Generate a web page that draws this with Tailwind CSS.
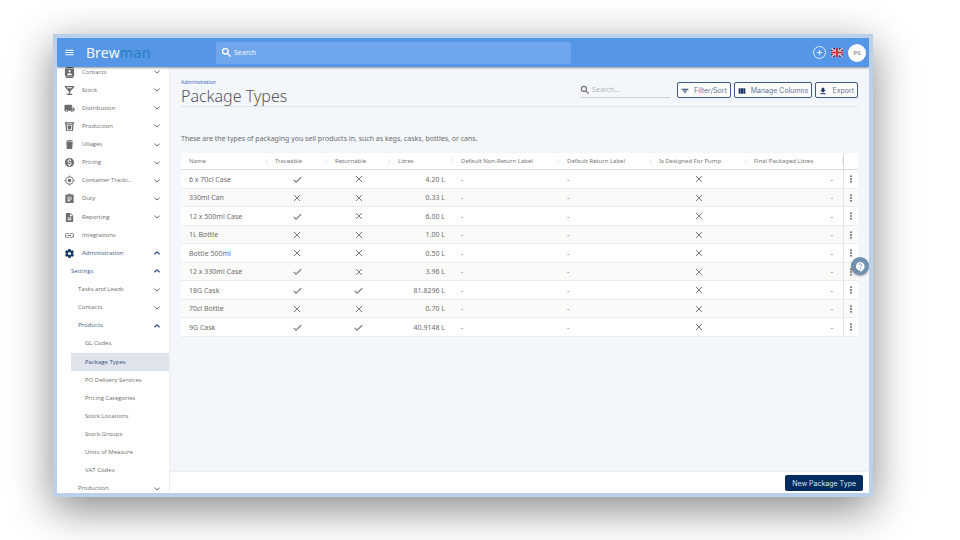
<!DOCTYPE html>
<html lang="en">
<head>
    <meta charset="UTF-8">
    <meta name="viewport" content="width=device-width, initial-scale=1.0">
    <title>Package Types - Brewman</title>
    <script src="https://cdn.jsdelivr.net/npm/@tailwindcss/browser@4"></script>
</head>
<body class="bg-white font-['Noto_Sans','Open_Sans',sans-serif] text-[#6c6c6c]">

    <!-- Icon sprite -->
    <svg class="hidden" xmlns="http://www.w3.org/2000/svg">
        <symbol id="menu" viewBox="0 0 24 24"><path d="M3 18h18v-2H3v2zm0-5h18v-2H3v2zm0-7v2h18V6H3z"/></symbol>
        <symbol id="search" viewBox="0 0 24 24"><g fill="none" stroke="currentColor" stroke-width="3"><circle cx="9.500" cy="9.500" r="6"/><path d="m14 14 7 7"/></g></symbol>
        <symbol id="contacts" viewBox="0 0 24 24"><path d="M4 0h16v2H4zM4 22h16v2H4zM20 3H4a2 2 0 0 0-2 2v14c0 1.100.9 2 2 2h16a2 2 0 0 0 2-2V5a2 2 0 0 0-2-2zm-8 3.500a2.500 2.500 0 1 1 0 5 2.500 2.500 0 0 1 0-5zM17 18H7v-1.500c0-2 3.300-3 5-3s5 1 5 3V18z"/></symbol>
        <symbol id="stock" viewBox="0 0 24 24"><path d="M22 5V2H2v3l8.500 9v5H6v3h12v-3h-4.500v-5L22 5zM7.400 7 5.700 5h12.700l-1.800 2H7.400z"/></symbol>
        <symbol id="truck" viewBox="0 0 24 24"><path d="M20 8h-3V4H3a2 2 0 0 0-2 2v11h2a3 3 0 0 0 6 0h6a3 3 0 0 0 6 0h2v-5l-3-4zM6 18.500a1.500 1.500 0 1 1 0-3 1.500 1.500 0 0 1 0 3zm13.500-9 2 2.500H17V9.500h2.500zM18 18.500a1.500 1.500 0 1 1 0-3 1.500 1.500 0 0 1 0 3z"/></symbol>
        <symbol id="production" viewBox="0 0 24 24"><path fill-rule="evenodd" d="M2 2h20v4h-1l-1.500 16h-15L3 6H2V2zm3 2v1.500h14V4H5zm1 4 .8 12h10.400L18 8H6z"/><path d="M8 10h8v5a4 4 0 0 1-8 0z"/></symbol>
        <symbol id="bin" viewBox="0 0 24 24"><path d="M6 21c0 .6.900 1 2 1h8c1.100 0 2-.4 2-1l1-15H5l1 15zM19 3h-3.500l-1-1h-5l-1 1H5v2h14V3z"/></symbol>
        <symbol id="pricing" viewBox="0 0 24 24"><path d="M12 2a10 10 0 1 0 0 20 10 10 0 0 0 0-20zm1.400 16.100V20h-2.700v-1.900c-1.700-.4-3.200-1.500-3.300-3.500h2c.1 1.100.8 1.900 2.600 1.900 2 0 2.400-1 2.400-1.600 0-.8-.4-1.600-2.700-2.100-2.500-.6-4.200-1.600-4.200-3.700 0-1.700 1.400-2.800 3.100-3.200V4h2.700v2c1.900.4 2.800 1.800 2.900 3.400h-2c0-1.100-.6-1.900-2.200-1.900-1.500 0-2.400.7-2.400 1.600 0 .8.700 1.400 2.700 1.900s4.200 1.400 4.200 3.900c0 1.800-1.400 2.800-3.100 3.200z"/></symbol>
        <symbol id="target" viewBox="0 0 24 24"><path d="M12 8a4 4 0 1 0 0 8 4 4 0 0 0 0-8zm8.900 3A9 9 0 0 0 13 3.100V1h-2v2.100A9 9 0 0 0 3.100 11H1v2h2.100a9 9 0 0 0 7.900 7.900V23h2v-2.100a9 9 0 0 0 7.900-7.900H23v-2h-2.100zM12 19a7 7 0 1 1 0-14 7 7 0 0 1 0 14z"/></symbol>
        <symbol id="duty" viewBox="0 0 24 24"><path d="M19 3h-4.200a3 3 0 0 0-5.600 0H5a2 2 0 0 0-2 2v15c0 1.100.9 2 2 2h14a2 2 0 0 0 2-2V5a2 2 0 0 0-2-2zm-7 0a1 1 0 1 1 0 2 1 1 0 0 1 0-2zm2 15H7v-2h7v2zm3-4H7v-2h10v2zm0-4H7V8h10v2z"/></symbol>
        <symbol id="report" viewBox="0 0 24 24"><path d="M14 2H6a2 2 0 0 0-2 2v16c0 1.100.9 2 2 2h12a2 2 0 0 0 2-2V8l-6-6zm2 16H8v-2h8v2zm0-4H8v-2h8v2zm-3-5V3.500L18.500 9H13z"/></symbol>
        <symbol id="link" viewBox="0 0 24 24"><path d="M3.900 12A3.100 3.100 0 0 1 7 8.900h4V7H7a5 5 0 0 0 0 10h4v-1.900H7A3.100 3.100 0 0 1 3.900 12zM8 13h8v-2H8v2zm9-6h-4v1.900h4a3.100 3.100 0 0 1 0 6.200h-4V17h4a5 5 0 0 0 0-10z"/></symbol>
        <symbol id="cog" viewBox="0 0 24 24"><path d="M19.400 13c.1-.3.100-.7.100-1s0-.7-.1-1l2.100-1.600c.2-.2.300-.4.100-.7l-2-3.400c-.1-.2-.4-.3-.6-.2l-2.500 1c-.5-.4-1.100-.7-1.700-1l-.4-2.600c0-.3-.2-.5-.5-.5h-4c-.2 0-.4.2-.5.400L9 5.100c-.6.300-1.100.6-1.700 1l-2.500-1c-.2-.1-.5 0-.6.2l-2 3.400c-.1.300 0 .5.100.7L4.500 11c0 .3-.1.700-.1 1s0 .7.100 1l-2.100 1.600c-.2.2-.3.400-.1.700l2 3.400c.1.200.4.300.6.200l2.500-1c.5.400 1.100.7 1.700 1l.4 2.600c0 .3.200.5.500.5h4c.3 0 .5-.2.500-.4l.4-2.700c.6-.3 1.200-.6 1.700-1l2.500 1c.2.100.5 0 .6-.2l2-3.400c.1-.2.100-.5-.1-.7L19.400 13zM12 15.500a3.500 3.500 0 1 1 0-7 3.500 3.500 0 0 1 0 7z"/></symbol>
        <symbol id="down" viewBox="0 0 24 24"><path fill="none" stroke="currentColor" stroke-width="3" d="m4 8 8 7 8-7"/></symbol>
        <symbol id="up" viewBox="0 0 24 24"><path fill="none" stroke="currentColor" stroke-width="4" d="m4 16 8-7 8 7"/></symbol>
        <symbol id="tick" viewBox="0 0 24 24"><path fill="none" stroke="currentColor" stroke-width="3" d="m2 13 6 6L22 6"/></symbol>
        <symbol id="cross" viewBox="0 0 24 24"><path fill="none" stroke="currentColor" stroke-width="3" d="m3 3 18 18M21 3 3 21"/></symbol>
        <symbol id="dots" viewBox="0 0 24 24"><circle cx="12" cy="4" r="3"/><circle cx="12" cy="12" r="3"/><circle cx="12" cy="20" r="3"/></symbol>
        <symbol id="filter" viewBox="0 0 24 24"><path d="M10 19h4v-3h-4v3zM2 5v3h20V5H2zm4 8.500h12v-3H6v3z"/></symbol>
        <symbol id="columns" viewBox="0 0 24 24"><path d="M2 4h6v16H2zM9 4h6v16H9zM16 4h6v16h-6z"/></symbol>
        <symbol id="download" viewBox="0 0 24 24"><path d="M20 9h-4V2H8v7H4l8 8 8-8zM4 19v3h16v-3H4z"/></symbol>
    </svg>

    <div class="h-screen pt-[34px] pr-[87px] pb-[43px] pl-[53px]">
        <div class="relative flex h-full flex-col overflow-hidden border-4 border-[#bbd0ea] shadow-[0_12px_40px_rgba(0,0,0,0.48)]">

            <!-- Top bar -->
            <header class="z-10 flex h-[29px] shrink-0 items-center bg-[#5596e6] pr-[3px] pl-[7px] text-white shadow-[0_1px_2px_rgba(0,0,0,0.4)]">
                <button type="button" aria-label="Menu"><svg class="size-[11px] fill-current"><use href="#menu"/></svg></button>
                <a href="#" class="ml-[11px] flex w-[130px] items-baseline font-['Open_Sans',sans-serif] text-[14px] leading-5">Brew<span class="font-['DejaVu_Sans',sans-serif] text-[14px] text-[#2482bd]">man</span></a>
                <label class="flex h-[22px] w-[355px] items-center gap-[2px] rounded-[2px] bg-[#70a7ec] pl-[5px]">
                    <svg class="size-[11px] shrink-0"><use href="#search"/></svg>
                    <input type="search" aria-label="Search everything" placeholder="Search" class="w-full bg-transparent pt-px text-[7px] outline-none placeholder:text-white/90">
                </label>
                <div class="ml-auto flex items-center gap-[5px]">
                    <button type="button" aria-label="Add" class="flex size-[13px] items-center justify-center rounded-full border border-white/80">
                        <svg class="size-[7px]" viewBox="0 0 8 8" stroke="currentColor"><path d="M4 1v6M1 4h6"/></svg>
                    </button>
                    <button type="button" aria-label="Language">
                        <svg class="h-[9px] w-3" viewBox="0 0 24 18">
                            <path fill="#223a80" d="M0 0h24v18H0z"/>
                            <path stroke="#fff" stroke-width="3" d="m0 0 24 18M24 0 0 18"/>
                            <path stroke="#d3283d" stroke-width="1" d="m0 0 24 18M24 0 0 18"/>
                            <path stroke="#fff" stroke-width="6" d="M12 0v18M0 9h24"/>
                            <path stroke="#d3283d" stroke-width="4" d="M12 0v18M0 9h24"/>
                        </svg>
                    </button>
                    <button type="button" class="size-[18px] rounded-full bg-white pt-px text-[6px] font-semibold text-[#888]">PS</button>
                </div>
            </header>

            <div class="flex min-h-0 flex-1">
                <!-- Sidebar, scrolled a little way down -->
                <aside class="w-[113px] shrink-0 overflow-hidden border-r border-[#edf0f4] bg-white font-['Open_Sans',sans-serif]">
                    <nav id="nav" class="-mt-1 grid h-[calc(100%+9px)] auto-rows-fr"></nav>
                </aside>

                <div class="flex min-w-0 flex-1 flex-col bg-[#f3f6fb]">
                    <main class="flex-1 px-[11px] pt-3">
                        <div class="flex h-7 items-start justify-between border-b border-[#dfe3e8]">
                            <div>
                                <a href="#" class="block text-[5px] leading-[6px] text-[#3f6fb5]">Administration</a>
                                <h1 class="text-[16px] leading-[22px] font-light text-[#555]">Package Types</h1>
                            </div>
                            <div class="mt-[3px] flex items-center gap-[3px]">
                                <label class="mr-1 flex h-4 w-[90px] items-center gap-[2px] border-b border-[#cdd0d4]">
                                    <svg class="size-[10px] shrink-0 text-[#777]"><use href="#search"/></svg>
                                    <input type="search" aria-label="Search package types" placeholder="Search..." class="w-full bg-transparent pt-px text-[7px] outline-none placeholder:text-[#b5b8bc]">
                                </label>
                                <button type="button" class="flex h-4 items-center gap-[5px] rounded-[2px] border border-[#3d588a] bg-white px-[3px] pt-px font-['Inter',sans-serif] text-[7px] leading-none text-[#5d7294]"><svg class="size-2 fill-[#1b3768]"><use href="#filter"/></svg>Filter/Sort</button>
                                <button type="button" class="flex h-4 items-center gap-[5px] rounded-[2px] border border-[#3d588a] bg-white px-[3px] pt-px font-['Inter',sans-serif] text-[7px] leading-none text-[#5d7294]"><svg class="size-2 fill-[#1b3768]"><use href="#columns"/></svg>Manage Columns</button>
                                <button type="button" class="flex h-4 items-center gap-[5px] rounded-[2px] border border-[#3d588a] bg-white px-[3px] pt-px font-['Inter',sans-serif] text-[7px] leading-none text-[#5d7294]"><svg class="size-2 fill-[#1b3768]"><use href="#download"/></svg>Export</button>
                            </div>
                        </div>

                        <p class="mt-[26px] mb-2 text-[7px] leading-3">These are the types of packaging you sell products in, such as kegs, casks, bottles, or cans.</p>

                        <table class="w-full table-fixed border-separate border-spacing-0 bg-white">
                            <colgroup>
                                <col class="w-[86px]"><col class="w-[60px]"><col class="w-[63px]"><col class="w-[63px]"><col class="w-[106px]"><col class="w-[92px]"><col class="w-[95px]"><col class="w-[97px]"><col class="w-[15px]">
                            </colgroup>
                            <thead id="columns-head"></thead>
                            <tbody id="rows"></tbody>
                        </table>
                    </main>

                    <footer class="flex h-[21px] items-center justify-end bg-white pr-[6px] shadow-[0_-1px_2px_rgba(0,0,0,0.05)]">
                        <button type="button" class="h-4 rounded-[2px] bg-[#022c5e] px-[7px] pt-px font-['Inter',sans-serif] text-[7px] leading-none text-[#dbe3ee]">New Package Type</button>
                    </footer>
                </div>
            </div>

            <!-- Floating help button -->
            <button type="button" aria-label="Help" class="absolute top-[219px] right-0 flex size-[18px] items-center justify-center rounded-full bg-[#718fae] shadow-[0_1px_2px_rgba(0,0,0,0.4)]">
                <svg class="size-[11px]" viewBox="0 0 24 24">
                    <path fill="#fff" d="M11.500 2a9.500 9.500 0 0 0 0 19h.5v3c4.900-2.300 9-7 9-12.500 0-5.200-4.300-9.500-9.500-9.500z"/>
                    <path fill="none" stroke="#718fae" stroke-width="2" d="M8.500 9a3 3 0 1 1 4.500 2.600c-1 .6-1.500 1.200-1.500 2.400M11.500 15.500v2"/>
                </svg>
            </button>
        </div>
    </div>

    <script>
        const icon = (name, cls) => `<svg class="${cls} fill-current"><use href="#${name}"/></svg>`;

        // [level, label, icon, state]
        const menu = [
            [0, 'Contacts', 'contacts', 'down'],
            [0, 'Stock', 'stock', 'down'],
            [0, 'Distribution', 'truck', 'down'],
            [0, 'Production', 'production', 'down'],
            [0, 'Ullages', 'bin', 'down'],
            [0, 'Pricing', 'pricing', 'down'],
            [0, 'Container Tracki...', 'target', 'down'],
            [0, 'Duty', 'duty', 'down'],
            [0, 'Reporting', 'report', 'down'],
            [0, 'Integrations', 'link', ''],
            [0, 'Administration', 'cog', 'up'],
            [1, 'Settings', '', 'up'],
            [2, 'Tasks and Leads', '', 'down'],
            [2, 'Contacts', '', 'down'],
            [2, 'Products', '', 'up'],
            [3, 'GL Codes', '', ''],
            [3, 'Package Types', '', 'active'],
            [3, 'PO Delivery Services', '', ''],
            [3, 'Pricing Categories', '', ''],
            [3, 'Stock Locations', '', ''],
            [3, 'Stock Groups', '', ''],
            [3, 'Units of Measure', '', ''],
            [3, 'VAT Codes', '', ''],
            [2, 'Production', '', 'down'],
        ];
        const indent = ['pl-[7px]', 'pl-[14px]', 'pl-[21px]', 'ml-[14px] pl-[14px]'];

        document.getElementById('nav').innerHTML = menu.map(([level, label, name, state]) => {
            const color = state === 'up' ? 'text-[#3c5c8c]' : state === 'active' ? 'bg-[#dfe4ec] text-[#35517c]' : 'text-[#6c6c6c]';
            const chevron = state === 'up' || state === 'down' ? icon(state, 'ml-auto size-2 shrink-0') : '';
            const lead = name ? icon(name, name === 'cog' ? 'mr-[7px] size-[11px] shrink-0 text-[#123566]' : 'mr-[7px] size-[11px] shrink-0') : '';
            return `<a href="#" class="flex items-center pr-2 text-[6px] whitespace-nowrap ${indent[level]} ${color}">${lead}${label}${chevron}</a>`;
        }).join('');

        const headings = ['Name', 'Traceable', 'Returnable', 'Litres', 'Default Non-Return Label', 'Default Return Label', 'Is Designed For Pump', 'Final Packaged Litres'];
        document.getElementById('columns-head').innerHTML = '<tr>' + headings.map(h =>
            `<th scope="col" class="h-[17px] border-b border-[#dcdcdc] p-0 text-left text-[6px] leading-none font-normal whitespace-nowrap text-[#777]"><span class="flex h-[6px] items-center border-r border-[#ececec] pl-2">${h}</span></th>`
        ).join('') + '<td class="border-b border-l border-[#dcdcdc]"></td></tr>';

        // [name, traceable, returnable, litres]
        const types = [
            ['6 x 70cl Case', true, false, '4.20 L'],
            ['330ml Can', false, false, '0.33 L'],
            ['12 x 500ml Case', true, false, '6.00 L'],
            ['1L Bottle', false, false, '1.00 L'],
            ['Bottle 500ml', false, false, '0.50 L'],
            ['12 x 330ml Case', true, false, '3.96 L'],
            ['18G Cask', true, true, '81.8296 L'],
            ['70cl Bottle', false, false, '0.70 L'],
            ['9G Cask', true, true, '40.9148 L'],
        ];
        const td = (content, cls) => `<td class="border-b border-[#e8ecf2] p-0 ${cls}">${content}</td>`;
        const flag = on => td(on ? icon('tick', 'mx-auto size-[9px]') : icon('cross', 'mx-auto size-2'), 'text-[#7a7a7a]');

        document.getElementById('rows').innerHTML = types.map(([name, traceable, returnable, litres]) =>
            '<tr class="h-[18px] text-[7px] leading-none odd:h-[19px] even:bg-[#fafaf9]">' +
            td(name, 'pl-2') + flag(traceable) + flag(returnable) + td(litres, 'pr-2 text-right') +
            td('-', 'pl-2') + td('-', 'pl-2') + flag(false) + td('-', 'pr-[10px] text-right') +
            td(`<button type="button" aria-label="Actions for ${name}" class="mx-auto block">${icon('dots', 'size-2')}</button>`, 'border-l border-l-[#e4e4e4]') +
            '</tr>'
        ).join('');
    </script>

</body>
</html>
